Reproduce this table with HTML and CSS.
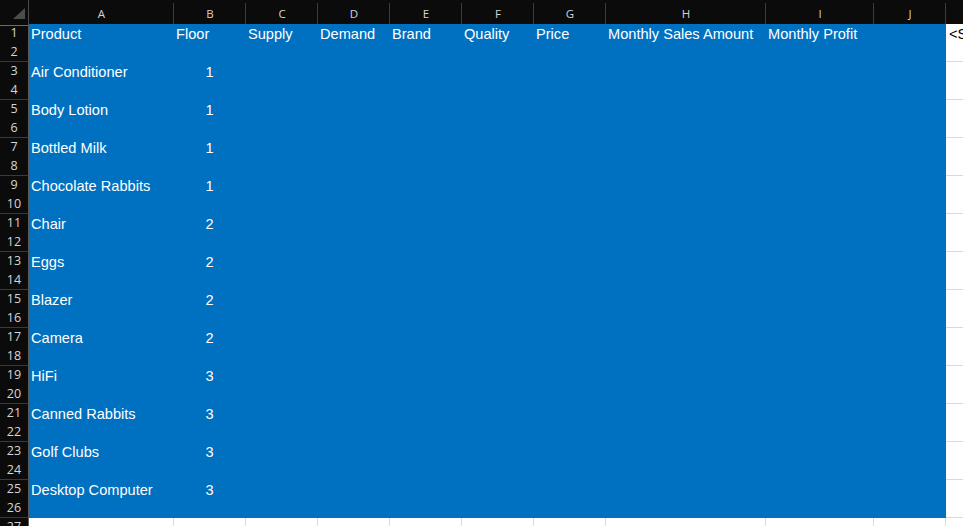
FILE: index.html
```html
<!DOCTYPE html>
<html>
<head>
<meta charset="utf-8">
<link rel="stylesheet" href="styles.css">
</head>
<body>
<div class="sheet">
  <div class="row hdr">
    <div class="corner"><span class="tri"></span></div>
    <div class="ch">A</div><div class="ch">B</div><div class="ch">C</div><div class="ch">D</div><div class="ch">E</div><div class="ch">F</div><div class="ch">G</div><div class="ch">H</div><div class="ch">I</div><div class="ch">J</div><div class="ch"></div><div class="ch end"></div>
  </div>
  <div class="row">
    <div class="rh">1</div>
    <div class="c f">Product</div><div class="c f">Floor</div><div class="c f">Supply</div><div class="c f">Demand</div><div class="c f">Brand</div><div class="c f">Quality</div><div class="c f">Price</div><div class="c f">Monthly Sales Amount</div><div class="c f">Monthly Profit</div><div class="c f"></div>
    <div class="c w dark">&lt;Select&gt;</div><div class="c w"></div>
  </div>
  <div class="row"><div class="rh">2</div><div class="c f all"></div><div class="c w"></div><div class="c w"></div></div>
  <div class="row"><div class="rh">3</div><div class="c f">Air Conditioner</div><div class="c f num">1</div><div class="c f rest"></div><div class="c w"></div><div class="c w"></div></div>
  <div class="row"><div class="rh">4</div><div class="c f all"></div><div class="c w"></div><div class="c w"></div></div>
  <div class="row"><div class="rh">5</div><div class="c f">Body Lotion</div><div class="c f num">1</div><div class="c f rest"></div><div class="c w"></div><div class="c w"></div></div>
  <div class="row"><div class="rh">6</div><div class="c f all"></div><div class="c w"></div><div class="c w"></div></div>
  <div class="row"><div class="rh">7</div><div class="c f">Bottled Milk</div><div class="c f num">1</div><div class="c f rest"></div><div class="c w"></div><div class="c w"></div></div>
  <div class="row"><div class="rh">8</div><div class="c f all"></div><div class="c w"></div><div class="c w"></div></div>
  <div class="row"><div class="rh">9</div><div class="c f">Chocolate Rabbits</div><div class="c f num">1</div><div class="c f rest"></div><div class="c w"></div><div class="c w"></div></div>
  <div class="row"><div class="rh">10</div><div class="c f all"></div><div class="c w"></div><div class="c w"></div></div>
  <div class="row"><div class="rh">11</div><div class="c f">Chair</div><div class="c f num">2</div><div class="c f rest"></div><div class="c w"></div><div class="c w"></div></div>
  <div class="row"><div class="rh">12</div><div class="c f all"></div><div class="c w"></div><div class="c w"></div></div>
  <div class="row"><div class="rh">13</div><div class="c f">Eggs</div><div class="c f num">2</div><div class="c f rest"></div><div class="c w"></div><div class="c w"></div></div>
  <div class="row"><div class="rh">14</div><div class="c f all"></div><div class="c w"></div><div class="c w"></div></div>
  <div class="row"><div class="rh">15</div><div class="c f">Blazer</div><div class="c f num">2</div><div class="c f rest"></div><div class="c w"></div><div class="c w"></div></div>
  <div class="row"><div class="rh">16</div><div class="c f all"></div><div class="c w"></div><div class="c w"></div></div>
  <div class="row"><div class="rh">17</div><div class="c f">Camera</div><div class="c f num">2</div><div class="c f rest"></div><div class="c w"></div><div class="c w"></div></div>
  <div class="row"><div class="rh">18</div><div class="c f all"></div><div class="c w"></div><div class="c w"></div></div>
  <div class="row"><div class="rh">19</div><div class="c f">HiFi</div><div class="c f num">3</div><div class="c f rest"></div><div class="c w"></div><div class="c w"></div></div>
  <div class="row"><div class="rh">20</div><div class="c f all"></div><div class="c w"></div><div class="c w"></div></div>
  <div class="row"><div class="rh">21</div><div class="c f">Canned Rabbits</div><div class="c f num">3</div><div class="c f rest"></div><div class="c w"></div><div class="c w"></div></div>
  <div class="row"><div class="rh">22</div><div class="c f all"></div><div class="c w"></div><div class="c w"></div></div>
  <div class="row"><div class="rh">23</div><div class="c f">Golf Clubs</div><div class="c f num">3</div><div class="c f rest"></div><div class="c w"></div><div class="c w"></div></div>
  <div class="row"><div class="rh">24</div><div class="c f all"></div><div class="c w"></div><div class="c w"></div></div>
  <div class="row"><div class="rh">25</div><div class="c f">Desktop Computer</div><div class="c f num">3</div><div class="c f rest"></div><div class="c w"></div><div class="c w"></div></div>
  <div class="row"><div class="rh">26</div><div class="c f all"></div><div class="c w"></div><div class="c w"></div></div>
  <div class="row"><div class="rh">27</div><div class="c w"></div><div class="c w"></div><div class="c w"></div><div class="c w"></div><div class="c w"></div><div class="c w"></div><div class="c w"></div><div class="c w"></div><div class="c w"></div><div class="c w"></div><div class="c w"></div><div class="c w"></div></div>
</div>
</body>
</html>
```
FILE: styles.css
```css
* { box-sizing: border-box; }
html, body { margin: 0; padding: 0; height: 100%; overflow: hidden; background: #ffffff; }
.sheet { font-family: "Liberation Sans", Arial, sans-serif; width: 963px; }
.row {
  display: grid;
  grid-template-columns: 29px 145px 72px 72px 72px 72px 72px 72px 160px 108px 72px 72px 1fr;
  height: 19px;
}
.hdr { height: 24px; background: #0b0b0b; }
.corner {
  position: relative;
  border-right: 1px solid #4a4a4a;
  border-bottom: 1px solid #6a6a6a;
}
.tri {
  position: absolute;
  left: 13px; top: 8px;
  width: 12px; height: 11px;
  background: #4c4c4c;
  clip-path: polygon(100% 0, 100% 100%, 0 100%);
}
.ch {
  color: #d4d4d4;
  font-family: "Open Sans", "Liberation Sans", sans-serif;
  font-size: 11.5px;
  text-align: center;
  line-height: 23px;
  padding-top: 2px;
  border-bottom: 1px solid #6a6a6a;
  background: linear-gradient(#3c3c3c, #3c3c3c) right 3px / 1px calc(100% - 4px) no-repeat;
}
.ch.end { background: none; }
.rh {
  background: #0b0b0b;
  color: #d6d6d6;
  font-family: "Open Sans", "Liberation Sans", sans-serif;
  font-size: 12.5px;
  text-align: center;
  line-height: 18px;
  border-right: 1px solid #5a5a5a;
  border-bottom: 1px solid #3a3a3a;
}
.c {
  font-size: 14.6px;
  line-height: 18px;
  padding: 1px 0 0 2px;
  white-space: nowrap;
  overflow: visible;
  border-right: 1px solid #dadada;
  border-bottom: 1px solid #dadada;
}
.f {
  background: #0070c0;
  color: #ffffff;
  border-color: #0070c0;
}
.num { text-align: center; padding-left: 0; }
.all { grid-column: span 10; }
.rest { grid-column: span 8; }
.w { background: #ffffff; }
.dark { color: #000000; padding-left: 3px; }
```
